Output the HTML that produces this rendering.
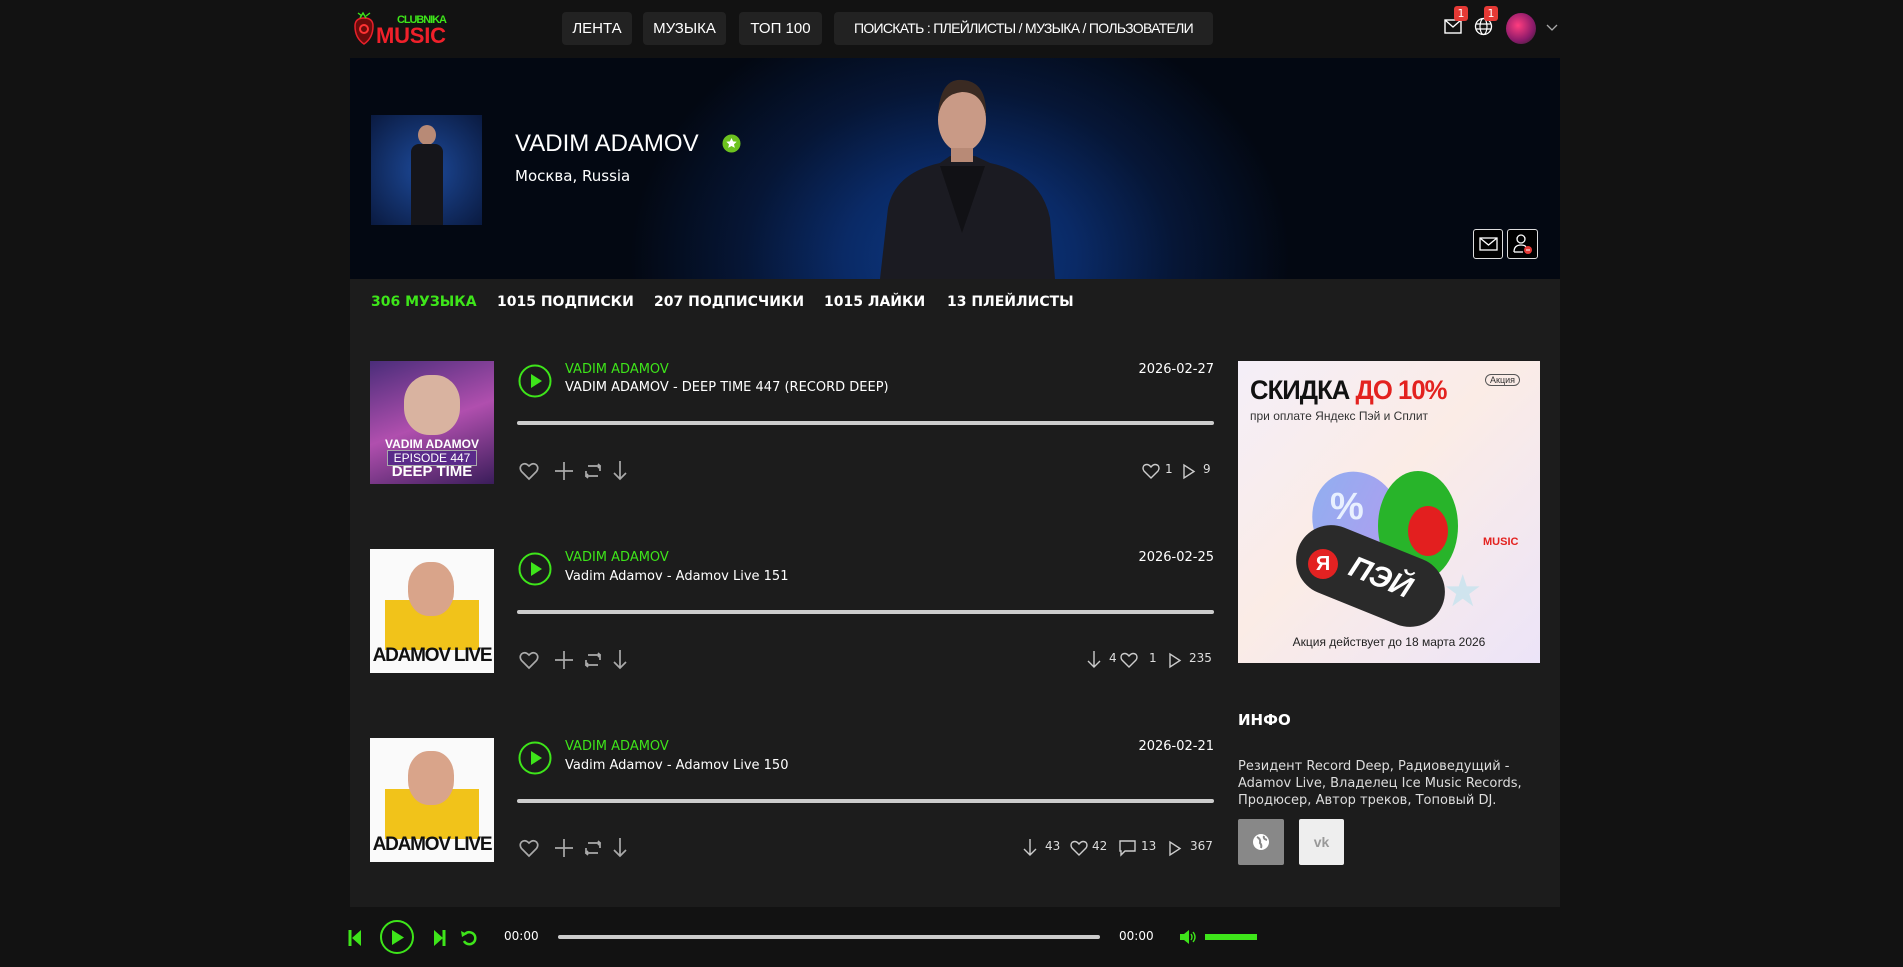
<!DOCTYPE html>
<html><head><meta charset="utf-8">
<style>
*{margin:0;padding:0;box-sizing:border-box}
body{width:1903px;height:967px;background:#121212;font-family:"DejaVu Sans","Liberation Sans",sans-serif;color:#fff;position:relative;overflow:hidden}
.a{position:absolute;white-space:nowrap}
.nav{position:absolute;top:12px;height:33px;background:#222;border-radius:4px;font-family:"Liberation Sans",sans-serif;font-size:15px;color:#fff;line-height:33px;text-align:center;white-space:nowrap;overflow:hidden}
.cont{position:absolute;left:350px;top:58px;width:1210px;height:849px;background:#1c1c1c}
.banner{position:absolute;left:350px;top:58px;width:1210px;height:221px;background:radial-gradient(ellipse 330px 260px at 610px 200px,#0d3a86 0%,#0a2a66 35%,#061636 65%,#030812 100%);overflow:hidden}
.tab{position:absolute;top:294px;font-weight:bold;font-size:14px;white-space:nowrap}
.g{color:#3ee51a}
.t{font-size:13px}
.bar{position:absolute;height:4px;background:#ccc;border-radius:2px}
.st{position:absolute;font-size:12px;color:#ddd}
.live{position:absolute;left:370px;width:124px;text-align:center;font:bold 19px 'Liberation Sans';color:#111;letter-spacing:-1.2px;white-space:nowrap}
</style></head><body>
<!-- header -->
<svg class="a" style="left:352px;top:10px" width="100" height="36" viewBox="0 0 100 36">
<path d="M3 16 q0-8 9-8 q9 0 9 8 q0 12-9 18 q-9-6-9-18z" fill="#6b0b0b" stroke="#e8202a" stroke-width="1.5"/>
<circle cx="12" cy="19" r="4" fill="none" stroke="#f33" stroke-width="2"/>
<path d="M8 8 l3-5 l3 5 M10 6 l-4-3 M14 6 l4-3" stroke="#3ee51a" fill="none" stroke-width="1.4"/>
<text x="45" y="13" font-family="Liberation Sans" font-weight="bold" font-size="11" fill="#3ee51a" textLength="50">CLUBNIKA</text>
<text x="24" y="33" font-family="Liberation Sans" font-weight="bold" font-size="22" fill="#f0202a" textLength="70">MUSIC</text>
</svg>
<div class="nav" style="left:562px;width:70px">ЛЕНТА</div>
<div class="nav" style="left:643px;width:83px">МУЗЫКА</div>
<div class="nav" style="left:739px;width:83px">ТОП 100</div>
<div class="nav" style="left:834px;width:379px;font-size:14px;letter-spacing:-0.7px">ПОИСКАТЬ : ПЛЕЙЛИСТЫ / МУЗЫКА / ПОЛЬЗОВАТЕЛИ</div>
<svg class="a" style="left:1444px;top:19px" width="18" height="15"><rect x="1" y="1" width="16" height="13" fill="none" stroke="#fff" stroke-width="1.4"/><path d="M1 1 l8 7 l8-7" fill="none" stroke="#fff" stroke-width="1.4"/></svg>
<div class="a" style="left:1454px;top:6px;width:14px;height:15px;background:#e53935;border-radius:3px;font-size:11px;text-align:center;line-height:15px">1</div>
<svg class="a" style="left:1474px;top:17px" width="19" height="19"><circle cx="9.5" cy="9.5" r="8" fill="none" stroke="#fff" stroke-width="1.3"/><ellipse cx="9.5" cy="9.5" rx="3.5" ry="8" fill="none" stroke="#fff" stroke-width="1.2"/><path d="M1.5 7h16M1.5 12h16" stroke="#fff" stroke-width="1.2"/></svg>
<div class="a" style="left:1484px;top:6px;width:14px;height:15px;background:#e53935;border-radius:3px;font-size:11px;text-align:center;line-height:15px">1</div>
<div class="a" style="left:1506px;top:13px;width:30px;height:31px;border-radius:50%;background:radial-gradient(circle at 40% 40%,#ff3d7f,#8a1a6a 60%,#222)"></div>
<svg class="a" style="left:1546px;top:24px" width="12" height="8"><path d="M1 1l5 5 5-5" fill="none" stroke="#aaa" stroke-width="1.3"/></svg>

<div class="cont"></div>
<div class="banner">
<svg class="a" style="left:0;top:0" width="1210" height="221">
<path d="M530 221 L538 150 Q545 115 590 105 L600 98 L625 98 L640 105 Q690 115 700 160 L705 221Z" fill="#1b1b22"/>
<path d="M590 108 L612 175 L635 108Z" fill="#111115"/>
<ellipse cx="612" cy="62" rx="24" ry="32" fill="#c99a86"/>
<path d="M588 58 Q590 20 612 22 Q637 23 636 58 Q632 34 612 34 Q592 36 588 58Z" fill="#3a2a22"/>
<rect x="601" y="90" width="22" height="14" fill="#b88a76"/>
</svg>
</div>
<div class="a" style="left:371px;top:115px;width:111px;height:110px;background:radial-gradient(ellipse at 50% 50%,#1d4a9a,#0a1a40)"></div>
<div class="a" style="left:418px;top:125px;width:18px;height:20px;border-radius:50%;background:#b88a76"></div>
<div class="a" style="left:411px;top:144px;width:32px;height:81px;background:#15151a;border-radius:8px 8px 0 0"></div>
<div class="a" style="left:515px;top:130px;font-size:24px;font-family:'Liberation Sans',sans-serif">VADIM ADAMOV</div>
<svg class="a" style="left:722px;top:134px" width="19" height="19"><circle cx="9.5" cy="9.5" r="9" fill="#6cc21f"/><path d="M9.5 4l1.6 3.4 3.6.4-2.7 2.5.8 3.6-3.3-1.9-3.3 1.9.8-3.6-2.7-2.5 3.6-.4z" fill="#fff"/></svg>
<div class="a" style="left:515px;top:167px;font-size:15px">Москва, Russia</div>
<div class="a" style="left:1473px;top:229px;width:30px;height:30px;border:1px solid #ddd;border-radius:3px;background:#000"></div>
<svg class="a" style="left:1479px;top:237px" width="19" height="14"><rect x="1" y="1" width="17" height="12" fill="none" stroke="#fff" stroke-width="1.3"/><path d="M1 1l8.5 7 8.5-7" fill="none" stroke="#fff" stroke-width="1.3"/></svg>
<div class="a" style="left:1507px;top:229px;width:31px;height:30px;border:1px solid #ddd;border-radius:3px;background:#000"></div>
<svg class="a" style="left:1512px;top:233px" width="22" height="23"><circle cx="9" cy="6" r="4" fill="none" stroke="#fff" stroke-width="1.3"/><path d="M2 19 q0-7 7-7 q4 0 5 2" fill="none" stroke="#fff" stroke-width="1.3"/><path d="M2 19h9" stroke="#fff" stroke-width="1.3"/><circle cx="16" cy="17" r="4" fill="#e53935"/><path d="M14 17h4" stroke="#fff"/></svg>

<div class="tab g" style="left:371px">306 МУЗЫКА</div>
<div class="tab" style="left:497px">1015 ПОДПИСКИ</div>
<div class="tab" style="left:654px">207 ПОДПИСЧИКИ</div>
<div class="tab" style="left:824px">1015 ЛАЙКИ</div>
<div class="tab" style="left:947px">13 ПЛЕЙЛИСТЫ</div>

<!-- T1 cover -->
<div class="a" style="left:370px;top:361px;width:124px;height:123px;background:linear-gradient(160deg,#4a2d7a,#b04fae 50%,#3a1d5a)"></div>
<div class="a" style="left:404px;top:375px;width:56px;height:60px;border-radius:45%;background:#d9b3a0"></div>
<div class="a" style="left:374px;top:437px;width:116px;font:bold 12px 'Liberation Sans';text-align:center;line-height:14px">VADIM ADAMOV<br><span style="background:#5a2a8a;border:1px solid #aaa;padding:0 6px;font-weight:normal">EPISODE 447</span><br><span style="font-size:15px">DEEP TIME</span></div>
<!-- T2/T3 covers -->
<div class="a" style="left:370px;top:549px;width:124px;height:124px;background:#fafafa"></div>
<div class="a" style="left:385px;top:600px;width:94px;height:50px;background:#f1c31a"></div>
<div class="a" style="left:408px;top:562px;width:46px;height:54px;border-radius:45%;background:#d9a48a"></div>
<div class="live" style="top:645px">ADAMOV LIVE</div>
<div class="a" style="left:370px;top:738px;width:124px;height:124px;background:#fafafa"></div>
<div class="a" style="left:385px;top:789px;width:94px;height:50px;background:#f1c31a"></div>
<div class="a" style="left:408px;top:751px;width:46px;height:54px;border-radius:45%;background:#d9a48a"></div>
<div class="live" style="top:834px">ADAMOV LIVE</div>

<svg width="0" height="0" style="position:absolute"><defs>
<g id="play"><circle cx="17" cy="17" r="15.5" fill="none" stroke="#3ee51a" stroke-width="2"/><path d="M13 10 L24 17 L13 24Z" fill="#3ee51a"/></g>
<g id="acts" fill="none" stroke="#aaa" stroke-width="1.7">
<path d="M10 18 L2.5 10.5 Q0 7 2.5 4 Q6 1 10 5 Q14 1 17.5 4 Q20 7 17.5 10.5Z"/>
<path d="M45 1v18M36 10h18"/>
<path d="M69 5h12v5M79 3l2 2-2 2M79 15h-12v-5M69 17l-2-2 2-2"/>
<path d="M101 0v18M95 12l6 6 6-6"/>
</g></defs></svg>

<svg class="a" style="left:518px;top:364px" width="34" height="34"><use href="#play"/></svg>
<div class="a t g" style="left:565px;top:362px">VADIM ADAMOV</div>
<div class="a t" style="left:565px;top:380px">VADIM ADAMOV - DEEP TIME 447 (RECORD DEEP)</div>
<div class="a t" style="left:1131px;top:362px;width:83px;text-align:right">2026-02-27</div>
<div class="bar" style="left:517px;top:421px;width:697px"></div>
<svg class="a" style="left:519px;top:461px" width="110" height="22"><use href="#acts"/></svg>

<svg class="a" style="left:518px;top:552px" width="34" height="34"><use href="#play"/></svg>
<div class="a t g" style="left:565px;top:550px">VADIM ADAMOV</div>
<div class="a t" style="left:565px;top:569px">Vadim Adamov - Adamov Live 151</div>
<div class="a t" style="left:1131px;top:550px;width:83px;text-align:right">2026-02-25</div>
<div class="bar" style="left:517px;top:610px;width:697px"></div>
<svg class="a" style="left:519px;top:650px" width="110" height="22"><use href="#acts"/></svg>

<svg class="a" style="left:518px;top:741px" width="34" height="34"><use href="#play"/></svg>
<div class="a t g" style="left:565px;top:739px">VADIM ADAMOV</div>
<div class="a t" style="left:565px;top:758px">Vadim Adamov - Adamov Live 150</div>
<div class="a t" style="left:1131px;top:739px;width:83px;text-align:right">2026-02-21</div>
<div class="bar" style="left:517px;top:799px;width:697px"></div>
<svg class="a" style="left:519px;top:838px" width="110" height="22"><use href="#acts"/></svg>

<!-- stats -->
<svg class="a" style="left:1142px;top:462px" width="74" height="18" fill="none" stroke="#ccc" stroke-width="1.4"><path d="M9 16L2 9Q0 6 2 3.5Q5.5 1 9 5Q12.5 1 16 3.5Q18 6 16 9Z"/><path d="M42 3v13l10-6.5z"/></svg>
<div class="st" style="left:1165px;top:462px">1</div><div class="st" style="left:1203px;top:462px">9</div>

<svg class="a" style="left:1086px;top:651px" width="130" height="18" fill="none" stroke="#ccc" stroke-width="1.4"><path d="M8 0v16M2 10l6 6 6-6"/><path d="M43 16L36 9Q34 6 36 3.5Q39.5 1 43 5Q46.5 1 50 3.5Q52 6 50 9Z"/><path d="M84 3v13l10-6.5z"/></svg>
<div class="st" style="left:1109px;top:651px">4</div><div class="st" style="left:1149px;top:651px">1</div><div class="st" style="left:1189px;top:651px">235</div>

<svg class="a" style="left:1022px;top:839px" width="194" height="18" fill="none" stroke="#ccc" stroke-width="1.4"><path d="M8 0v16M2 10l6 6 6-6"/><path d="M57 16L50 9Q48 6 50 3.5Q53.5 1 57 5Q60.5 1 64 3.5Q66 6 64 9Z"/><path d="M98 2h15v10h-10l-4 4v-4h-1z"/><path d="M148 3v13l10-6.5z"/></svg>
<div class="st" style="left:1045px;top:839px">43</div><div class="st" style="left:1092px;top:839px">42</div><div class="st" style="left:1141px;top:839px">13</div><div class="st" style="left:1190px;top:839px">367</div>

<!-- ad -->
<div class="a" style="left:1238px;top:361px;width:302px;height:302px;background:linear-gradient(135deg,#f4eef8 0%,#fbece6 45%,#ece4f8 100%);overflow:hidden">
<div class="a" style="left:12px;top:14px;font:bold 27px 'Liberation Sans';color:#111;letter-spacing:-1px;transform:scaleX(0.95);transform-origin:left">СКИДКА <span style="color:#e3221f">ДО 10%</span></div>
<div class="a" style="left:247px;top:13px;border:1.5px solid #555;border-radius:7px;font:9px 'Liberation Sans';color:#333;padding:0 4px">Акция</div>
<div class="a" style="left:12px;top:48px;font:12px 'Liberation Sans';color:#333">при оплате Яндекс Пэй и Сплит</div>
<div class="a" style="left:75px;top:110px;width:88px;height:100px;border-radius:50%;background:linear-gradient(135deg,#8fb0f0,#b49af0);transform:rotate(-20deg)"></div>
<div class="a" style="left:92px;top:125px;font:bold 38px 'Liberation Sans';color:#e8f0ff">%</div>
<div class="a" style="left:140px;top:110px;width:80px;height:110px;border-radius:50%;background:#28b42a"></div>
<div class="a" style="left:170px;top:145px;width:40px;height:50px;border-radius:50%;background:#e31f1f"></div>
<div class="a" style="left:55px;top:180px;width:155px;height:70px;border-radius:35px;background:#2a2a2a;transform:rotate(22deg)"></div>
<div class="a" style="left:70px;top:188px;width:30px;height:30px;border-radius:50%;background:#e32222;font:bold 20px 'Liberation Sans';text-align:center;line-height:30px">Я</div>
<div class="a" style="left:110px;top:200px;font:bold italic 30px 'Liberation Sans';transform:rotate(22deg)">ПЭЙ</div>
<div class="a" style="left:205px;top:205px;font-size:44px;color:#cfe4ee">★</div>
<div class="a" style="left:245px;top:175px;font:bold 11px 'Liberation Sans';color:#e3221f">MUSIC</div>
<div class="a" style="left:0;top:274px;width:302px;text-align:center;font:12px 'Liberation Sans';color:#222">Акция действует до 18 марта 2026</div>
</div>

<div class="a" style="left:1238px;top:711px;font-weight:bold;font-size:15px">ИНФО</div>
<div class="a" style="left:1238px;top:758px;width:310px;font-size:13px;line-height:17px;color:#ddd;white-space:normal">Резидент Record Deep, Радиоведущий - Adamov Live, Владелец Ice Music Records, Продюсер, Автор треков, Топовый DJ.</div>
<div class="a" style="left:1238px;top:819px;width:46px;height:46px;background:#888;border-radius:2px"></div>
<svg class="a" style="left:1252px;top:833px" width="18" height="18"><circle cx="9" cy="9" r="8" fill="#fff"/><path d="M5 4q4 2 3 6q2 2 1 5M12 3q-1 3 3 4" stroke="#888" stroke-width="2" fill="none"/></svg>
<div class="a" style="left:1299px;top:819px;width:45px;height:46px;background:#eee;border-radius:2px;font:bold 14px 'Liberation Sans';color:#999;text-align:center;line-height:46px">vk</div>

<!-- player -->
<svg class="a" style="left:348px;top:920px" width="140" height="36">
<path d="M2 10v16" stroke="#3ee51a" stroke-width="3"/><path d="M13 10L4 18l9 8z" fill="#3ee51a"/>
<circle cx="49" cy="17" r="16" fill="none" stroke="#3ee51a" stroke-width="2"/><path d="M44 10l12 7.5-12 7.5z" fill="#3ee51a"/>
<path d="M86 10l9 8-9 8z" fill="#3ee51a"/><path d="M96 10v16" stroke="#3ee51a" stroke-width="3"/>
<path d="M117 14a6 6 0 1 1-1 7" fill="none" stroke="#3ee51a" stroke-width="2.5"/><path d="M113 11l1 6 5-3z" fill="#3ee51a"/>
</svg>
<div class="a" style="left:504px;top:929px;font-size:12px">00:00</div>
<div class="a" style="left:558px;top:935px;width:542px;height:4px;background:#ccc;border-radius:2px"></div>
<div class="a" style="left:1119px;top:929px;font-size:12px">00:00</div>
<svg class="a" style="left:1179px;top:929px" width="18" height="16"><path d="M1 5h4l5-4v14l-5-4H1z" fill="#3ee51a"/><path d="M12 5q2 3 0 6M14 3q4 5 0 10" stroke="#3ee51a" fill="none" stroke-width="1.4"/></svg>
<div class="a" style="left:1205px;top:934px;width:52px;height:6px;background:#3ee51a"></div>
</body></html>
